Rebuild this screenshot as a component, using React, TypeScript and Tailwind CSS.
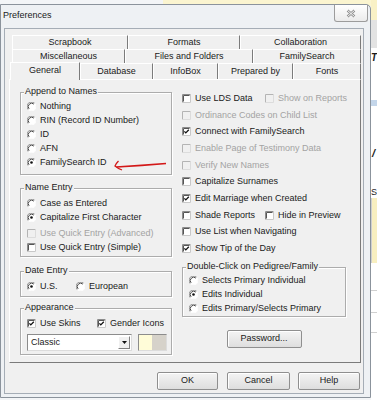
import type { ReactNode } from 'react';

function Radio({ checked = false }: { checked?: boolean }) {
  return (
    <svg className="shrink-0" width="9" height="9" viewBox="0 0 9 9">
      <circle cx="4.5" cy="4.5" r="4" fill="#fff" />
      <path d="M7.7 1.3A4.5 4.5 0 0 0 1.3 7.7" fill="none" stroke="#8c8c8c" />
      <path d="M6.9 2.1A3.4 3.4 0 0 0 2.1 6.9" fill="none" stroke="#474747" />
      <path d="M1.3 7.7A4.5 4.5 0 0 0 7.7 1.3" fill="none" stroke="#fff" />
      {checked && <circle cx="4.5" cy="4.5" r="1.3" fill="#111" />}
    </svg>
  );
}

function Check({ checked = false, disabled = false }: { checked?: boolean; disabled?: boolean }) {
  return (
    <svg className="shrink-0" width="9" height="9" viewBox="0 0 9 9">
      <rect x="0" y="0" width="9" height="9" fill={disabled ? '#f0f0f0' : '#fff'} />
      <path d="M0.5 8.5V0.5H8.5" fill="none" stroke={disabled ? '#b4b4b4' : '#8c8c8c'} />
      {!disabled && <path d="M1.5 7.5V1.5H7.5" fill="none" stroke="#555" />}
      <path d="M8.5 0.5V8.5H0.5" fill="none" stroke={disabled ? '#dcdcdc' : '#c8c8c8'} />
      {checked && (
        <path d="M2.4 4.4L3.8 5.9L6.8 2.8" fill="none" stroke="#111" strokeWidth="1.3" />
      )}
    </svg>
  );
}

function Option({
  kind,
  label,
  checked,
  disabled,
  className = '',
}: {
  kind: 'radio' | 'check';
  label: string;
  checked?: boolean;
  disabled?: boolean;
  className?: string;
}) {
  return (
    <div className={`flex items-center gap-[4px] ${className}`}>
      {kind === 'radio' ? <Radio checked={checked} /> : <Check checked={checked} disabled={disabled} />}
      <span className={`whitespace-nowrap leading-[11px] ${disabled ? 'text-[#a3a3a3]' : ''}`}>{label}</span>
    </div>
  );
}

function Group({ title, className = '', children }: { title: string; className?: string; children: ReactNode }) {
  return (
    <div
      className={`relative border border-[#acacac] shadow-[inset_1px_1px_0_#fff,1px_1px_0_#fff] ${className}`}
    >
      <span className="absolute left-[3px] -top-[7px] px-[1px] bg-[#f0f0f0] leading-[11px] whitespace-nowrap">
        {title}
      </span>
      {children}
    </div>
  );
}

function Tab({ label, w }: { label: string; w: string }) {
  return (
    <div
      className={`flex items-center justify-center h-full border-t border-l border-white border-r border-r-[#7b7b7b] ${w}`}
    >
      {label}
    </div>
  );
}

function Button({ label, w }: { label: string; w: string }) {
  return (
    <div
      className={`flex items-center justify-center h-[18px] border border-[#8f8f8f] rounded-[2px] bg-linear-to-b from-[#f4f4f4] to-[#dedede] shadow-[inset_1px_1px_0_#fff] ${w}`}
    >
      {label}
    </div>
  );
}

export default function App() {
  return (
    <div className="relative w-[377px] h-[400px] overflow-hidden bg-[#f3f5f7] font-['Liberation_Sans',Arial,sans-serif] text-[9px] text-[#1a1a1a]">
      {/* desktop behind the dialog */}
      <div className="absolute left-[163px] top-0 w-[214px] h-[6px] bg-[#fbf5d0]" />
      <div className="absolute left-[371px] top-0 w-[6px] h-[400px] bg-white flex flex-col">
        <div className="h-[20px] bg-[#f9f1c6]" />
        <div className="h-[28px] bg-[#e3e3e3]" />
        <div className="h-[20px] italic font-bold text-[10px] leading-[20px]">T</div>
        <div className="h-[32px]" />
        <div className="h-[6px] bg-[#c4d6ea]" />
        <div className="h-[40px]" />
        <div className="h-[14px] pl-[1px] italic font-bold text-[11px] leading-[14px]">/</div>
        <div className="h-[26px]" />
        <div className="h-[12px] text-[9px] leading-[12px]">S</div>
        <div className="h-[65px] bg-[#f8efc0] border-l border-[#cfcfcf]" />
        <div className="h-[28px] border-b border-[#d0d0d0]" />
        <div className="h-[22px] border-b border-[#d0d0d0]" />
        <div className="h-[20px] border-b border-[#d0d0d0]" />
      </div>

      {/* dialog window */}
      <div className="absolute left-0 top-[4px] w-[371px] h-[394px] flex flex-col border border-[#8b939c] rounded-tr-[5px] bg-[#eef1f4]">
        <div className="h-[23px] shrink-0 flex items-start justify-between">
          <span className="pl-[2px] pt-[5px] leading-[11px]">Preferences</span>
          <div className="mr-[2px] w-[34px] h-[17px] flex items-center justify-center border border-t-0 border-[#9c9c9c] rounded-b-[3px] bg-linear-to-b from-white to-[#ebebeb]">
            <svg width="10" height="9" viewBox="0 0 10 9">
              <path d="M1.5 1.5L8.5 7.5M8.5 1.5L1.5 7.5" stroke="#8e8e8e" strokeWidth="2.4" />
              <path d="M1.5 1.5L8.5 7.5M8.5 1.5L1.5 7.5" stroke="#fff" strokeWidth="0.9" />
            </svg>
          </div>
        </div>

        <div className="flex-1 ml-[3px] mr-[6px] mb-[3px] border border-[#a5adb6] bg-[#f0f0f0] pt-[6px]">
          {/* tab rows */}
          <div className="pl-[7px]">
            <div className="flex h-[14px]">
              <Tab label="Scrapbook" w="w-[116px]" />
              <Tab label="Formats" w="w-[112px]" />
              <Tab label="Collaboration" w="w-[121px]" />
            </div>
            <div className="flex h-[14px]">
              <Tab label="Miscellaneous" w="w-[113px]" />
              <Tab label="Files and Folders" w="w-[128px]" />
              <Tab label="FamilySearch" w="w-[108px]" />
            </div>
            <div className="flex items-end h-[16px]">
              <div className="relative z-10 top-px -ml-[2px] w-[70px] h-[18px] shrink-0 flex items-center justify-center pb-[2px] bg-[#f0f0f0] border-t border-l border-white border-r border-r-[#7b7b7b]">
                General
              </div>
              <Tab label="Database" w="w-[73px]" />
              <Tab label="InfoBox" w="w-[65px]" />
              <Tab label="Prepared by" w="w-[75px]" />
              <Tab label="Fonts" w="w-[68px]" />
            </div>
          </div>

          {/* General panel */}
          <div className="ml-[4px] w-[352px] h-[284px] flex gap-[10px] pl-[10px] border border-t-white border-l-white border-r-[#7b7b7b] border-b-[#7b7b7b]">
            <div className="w-[152px] shrink-0 pt-[12px]">
              <Group title="Append to Names" className="pt-[6px] pb-[5px] pl-[6px]">
                <Option kind="radio" label="Nothing" className="h-[14px]" />
                <Option kind="radio" label="RIN (Record ID Number)" className="h-[14px]" />
                <Option kind="radio" label="ID" className="h-[14px]" />
                <Option kind="radio" label="AFN" className="h-[14px]" />
                <Option kind="radio" label="FamilySearch ID" checked className="h-[14px]" />
              </Group>

              <Group title="Name Entry" className="mt-[13px] pt-[7px] pb-[2px] pl-[6px]">
                <Option kind="radio" label="Case as Entered" className="h-[14px]" />
                <Option kind="radio" label="Capitalize First Character" checked className="h-[14px]" />
                <Option kind="check" label="Use Quick Entry (Advanced)" disabled className="h-[14px] mt-[2px]" />
                <Option kind="check" label="Use Quick Entry (Simple)" className="h-[14px]" />
              </Group>

              <Group title="Date Entry" className="mt-[14px] pt-[7px] pb-[3px] pl-[6px] flex">
                <Option kind="radio" label="U.S." checked className="h-[14px] w-[49px]" />
                <Option kind="radio" label="European" className="h-[14px]" />
              </Group>

              <Group title="Appearance" className="mt-[11px] pt-[7px] pb-[3px] pl-[6px]">
                <div className="flex">
                  <Option kind="check" label="Use Skins" checked className="h-[14px] w-[70px]" />
                  <Option kind="check" label="Gender Icons" checked className="h-[14px]" />
                </div>
                <div className="mt-[4px] flex gap-[6px]">
                  <div className="w-[105px] h-[17px] flex items-center justify-between bg-white border border-[#8c8c8c] border-r-[#dcdcdc] border-b-[#dcdcdc]">
                    <span className="pl-[3px] leading-[11px]">Classic</span>
                    <div className="mr-px w-[12px] h-[13px] flex items-center justify-center bg-[#f0f0f0] border border-white border-r-[#808080] border-b-[#808080]">
                      <svg width="5" height="3" viewBox="0 0 5 3">
                        <path d="M0 0H5L2.5 3Z" fill="#111" />
                      </svg>
                    </div>
                  </div>
                  <div className="w-[29px] h-[17px] flex border border-[#8c8c8c] border-r-[#dcdcdc] border-b-[#dcdcdc]">
                    <div className="flex-1 bg-[#fffcd8]" />
                    <div className="w-[14px] bg-[#d6d2ca]" />
                  </div>
                </div>
              </Group>
            </div>

            <div className="w-[165px] shrink-0 pt-[10px]">
              <div className="flex h-[16.7px]">
                <Option kind="check" label="Use LDS Data" className="w-[83px]" />
                <Option kind="check" label="Show on Reports" disabled />
              </div>
              <Option kind="check" label="Ordinance Codes on Child List" disabled className="h-[16.7px]" />
              <Option kind="check" label="Connect with FamilySearch" checked className="h-[16.7px]" />
              <Option kind="check" label="Enable Page of Testimony Data" disabled className="h-[16.7px]" />
              <Option kind="check" label="Verify New Names" disabled className="h-[16.7px]" />
              <Option kind="check" label="Capitalize Surnames" className="h-[16.7px]" />
              <Option kind="check" label="Edit Marriage when Created" checked className="h-[16.7px]" />
              <div className="flex h-[16.7px]">
                <Option kind="check" label="Shade Reports" className="w-[83px]" />
                <Option kind="check" label="Hide in Preview" />
              </div>
              <Option kind="check" label="Use List when Navigating" className="h-[16.7px]" />
              <Option kind="check" label="Show Tip of the Day" checked className="h-[16.7px]" />

              <Group title="Double-Click on Pedigree/Family" className="mt-[10px] w-[164px] pt-[6px] pl-[6px]">
                <Option kind="radio" label="Selects Primary Individual" className="h-[14px]" />
                <Option kind="radio" label="Edits Individual" checked className="h-[14px]" />
                <Option kind="radio" label="Edits Primary/Selects Primary" className="h-[14px]" />
              </Group>

              <div className="mt-[13px] w-[164px] flex justify-center">
                <Button label="Password..." w="w-[75px]" />
              </div>
            </div>
          </div>

          {/* dialog buttons */}
          <div className="mt-[9px] pr-[3px] flex justify-end gap-[8px]">
            <Button label="OK" w="w-[61px] mr-px" />
            <Button label="Cancel" w="w-[63px]" />
            <Button label="Help" w="w-[62px]" />
          </div>
        </div>
      </div>

      {/* red hand-drawn arrow */}
      <svg className="absolute left-[112px] top-[156px]" width="58" height="18" viewBox="0 0 58 18">
        <path d="M6.5 5Q4 7.5 3 10Q6 12.5 10 14" fill="none" stroke="#d31818" strokeWidth="1.3" />
        <path d="M4.5 11Q30 9.5 54 7.5" fill="none" stroke="#d31818" strokeWidth="1.3" />
      </svg>
    </div>
  );
}
